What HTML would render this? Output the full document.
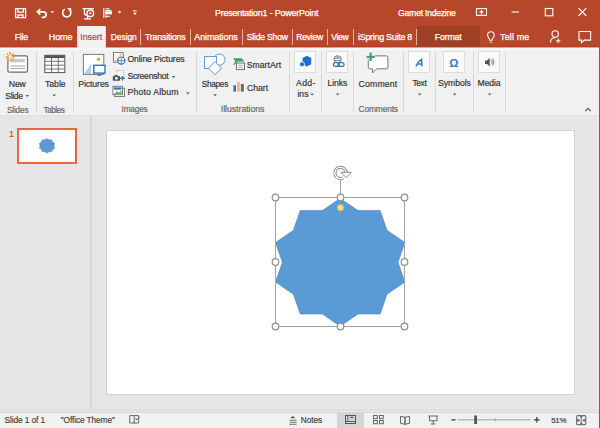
<!DOCTYPE html>
<html><head><meta charset="utf-8">
<style>
*{margin:0;padding:0;box-sizing:border-box}
html,body{width:600px;height:428px;overflow:hidden;background:#e6e6e6;font-family:"Liberation Sans",sans-serif;position:relative}
.a{position:absolute}
.t{position:absolute;white-space:nowrap;font-family:"Liberation Sans",sans-serif;-webkit-text-stroke:0.18px currentColor}
svg{position:absolute;overflow:visible}
.tsep{position:absolute;top:29px;width:1px;height:16px;background:#e2b3a6}
.gsep{position:absolute;top:51px;width:1px;height:61px;background:#dadada}
.ibox{position:absolute;top:51px;width:22px;height:22px;background:#fbfbfb;border:1px solid #dcdcdc}
</style></head><body>
<!-- bars -->
<div class="a" style="left:0;top:0;width:600px;height:47px;background:#b7472a"></div>
<div class="a" style="left:0;top:46px;width:600px;height:1px;background:#b2401f"></div>
<div class="a" style="left:0;top:47px;width:600px;height:1px;background:#d8a597"></div>
<div class="a" style="left:0;top:48px;width:599px;height:66px;background:#f1f1f1"></div>
<div class="a" style="left:0;top:48px;width:599px;height:2px;background:#f6f7f8"></div>
<div class="a" style="left:0;top:114px;width:599px;height:1px;background:#f4f4f4"></div>
<div class="a" style="left:0;top:115px;width:599px;height:1px;background:#dedede"></div>
<div class="a" style="left:92px;top:408px;width:507px;height:1px;background:repeating-linear-gradient(90deg,#ebebeb 0 2px,#e6e6e6 2px 4px)"></div>
<div class="a" style="left:0;top:409px;width:599px;height:2px;background:#dedede"></div>
<div class="a" style="left:0;top:411px;width:599px;height:1px;background:#e8e8e8"></div>
<div class="a" style="left:0;top:412px;width:599px;height:1px;background:#d4d4d4"></div>
<div class="a" style="left:0;top:413px;width:599px;height:15px;background:#f1f1f1"></div>
<div class="a" style="left:597px;top:116px;width:2px;height:293px;background:#ececec"></div>
<div class="a" style="left:599px;top:0;width:1px;height:428px;background:#b7472a"></div>

<!-- active tab -->
<div class="a" style="left:77px;top:26px;width:29px;height:22px;background:#f1f1f1;border-left:1px dotted #c9c9c9;border-right:1px dotted #c9c9c9"></div>
<div class="a" style="left:417px;top:26px;width:63px;height:21px;background:#a13f25 radial-gradient(circle,#b0513a 0.5px,transparent 0.6px) 0 0/4px 4px"></div>

<!-- tab separators -->
<div class="tsep" style="left:140px"></div>
<div class="tsep" style="left:190px"></div>
<div class="tsep" style="left:242px"></div>
<div class="tsep" style="left:292px"></div>
<div class="tsep" style="left:327px"></div>
<div class="tsep" style="left:353px"></div>
<div class="tsep" style="left:416px"></div>

<!-- QAT icons -->
<svg style="left:0;top:0" width="600" height="26" viewBox="0 0 600 26" fill="none" stroke="#fff" stroke-width="1.3">
  <!-- save -->
  <path d="M15.6 8.6h10v9h-10z M18 8.6v3.6h5.4V8.6 M18 17.6v-2.6h5v2.6"/>
  <!-- undo -->
  <path d="M37.5 11.8h5.8a2.8 2.8 0 0 1 0 5.6h-1.6 M40.2 9l-2.8 2.8 2.8 2.8" stroke-width="1.7"/>
  <path d="M50.5 11.2l1.8 2 1.8-2z" fill="#fff" stroke="none"/>
  <!-- repeat -->
  <path d="M64.8 9.2A4.1 4.1 0 1 0 69.9 10.2" stroke-width="1.6"/>
  <path d="M67 8.1h4.2v4.2z" fill="#fff" stroke="none"/>
  <!-- present from beginning -->
  <path d="M82.5 8.7h11.5 M84.5 8.7v4.5a2 2 0 0 0 2 2h1 M87.5 18.5v-3 M84 18.8h7"/>
  <circle cx="90.3" cy="13.3" r="3.3"/>
  <path d="M89.5 11.8l2.2 1.5-2.2 1.5z" fill="#fff" stroke="none"/>
  <!-- touch/mouse -->
  <path d="M103.8 8v10" stroke-width="1.1"/>
  <path d="M105.5 8.8h4 M105.5 10.5h6" stroke-width="1"/>
  <rect x="105" y="11.3" width="7" height="3" fill="#fff" stroke="none"/>
  <path d="M105 16.3h5 M106.8 14.8l-1.6 1.5 1.6 1.5" stroke-width="1"/>
  <path d="M117.6 11.2l1.9 2.3 1.9-2.3z" fill="#fff" stroke="none"/>
  <path d="M133 10.9h3.8" stroke-width="1"/>
  <path d="M133 12.8l1.9 2.2 1.9-2.2z" fill="#fff" stroke="none"/>
  <!-- window controls -->
  <rect x="476.5" y="8.6" width="10" height="6.8" stroke-width="1.1"/>
  <path d="M481.5 14.8v-4 M479.6 12.6l1.9-1.9 1.9 1.9" stroke-width="1.1"/>
  <path d="M511.6 12h7.3" stroke-width="1.1"/>
  <rect x="545.3" y="8.5" width="7.5" height="7.3" stroke-width="1.1"/>
  <path d="M578.5 8.2l7.8 7.8 M586.3 8.2l-7.8 7.8" stroke-width="1.1"/>
</svg>

<!-- tell me / share icons -->
<svg style="left:0;top:26px" width="600" height="22" viewBox="0 26 600 22" fill="none" stroke="#fff" stroke-width="1.1">
  <path d="M489.8 40.2c0-1.6-2.2-2.6-2.2-5.2a3.3 3.3 0 0 1 6.6 0c0 2.6-2.2 3.6-2.2 5.2z M490 42.2h1.8"/>
  <circle cx="555.2" cy="34" r="3.2"/>
  <path d="M550.3 42.6c0.4-3 2.3-4.8 4.9-4.8 M558.2 38.6v4.4 M556 40.8h4.4"/>
  <path d="M579 31.5h11.6v8.6h-6.4l-2.8 2.6v-2.6H579z"/>
</svg>

<!-- ribbon group separators -->
<div class="gsep" style="left:36px"></div>
<div class="gsep" style="left:73px"></div>
<div class="gsep" style="left:196px"></div>
<div class="gsep" style="left:289px"></div>
<div class="gsep" style="left:321px"></div>
<div class="gsep" style="left:353px"></div>
<div class="gsep" style="left:403px"></div>
<div class="gsep" style="left:435px"></div>
<div class="gsep" style="left:473px"></div>
<div class="gsep" style="left:505px"></div>

<!-- icon boxes -->
<div class="ibox" style="left:294px"></div>
<div class="ibox" style="left:326px"></div>
<div class="ibox" style="left:408px"></div>
<div class="ibox" style="left:443px"></div>
<div class="ibox" style="left:478px"></div>

<!-- ribbon icons -->
<svg style="left:0;top:48px" width="600" height="67" viewBox="0 48 600 67" fill="none">
  <!-- New slide -->
  <rect x="7.9" y="55.9" width="19.6" height="16.3" rx="1.5" fill="#fff" stroke="#6b6b6b" stroke-width="1.2"/>
  <rect x="10.5" y="58.9" width="14.4" height="3.4" fill="#c8c8c8"/>
  <path d="M10.5 66h14.4 M10.5 68.5h14.4" stroke="#8a8a8a" stroke-width="0.8"/>
  <g stroke="#f7c45a" stroke-width="1.3"><path d="M10.2 52.3v9 M5.7 56.8h9 M7 53.6l6.4 6.4 M13.4 53.6l-6.4 6.4"/></g>
  <g stroke="#ee8a4e" stroke-width="1.3"><path d="M10.2 52.3v1.6 M10.2 59.7v1.6 M5.7 56.8h1.6 M12.8 56.8h1.6 M7 53.6l1.1 1.1 M13.4 53.6l-1.1 1.1 M7 60l1.1-1.1 M13.4 60l-1.1-1.1"/></g>
  <circle cx="10.2" cy="56.8" r="1.5" fill="#eef6fb"/>
  <!-- Table -->
  <rect x="44.8" y="55.3" width="20" height="17.3" fill="#fff" stroke="#555" stroke-width="1"/>
  <rect x="44.8" y="55.3" width="20" height="2.8" fill="#555"/>
  <path d="M51.5 58v14.6 M58.3 58v14.6 M44.8 61.3h20 M44.8 65.2h20 M44.8 69h20" stroke="#666" stroke-width="0.9"/>
  <path d="M52.5 94.4h3.4l-1.7 2.2z" fill="#555"/>
  <path d="M25.6 95h3.4l-1.7 2z" fill="#555"/>
  <!-- Pictures -->
  <rect x="83.4" y="54.4" width="20.4" height="20" fill="#fff" stroke="#7a7a7a" stroke-width="1"/>
  <path d="M83.8 74l7.2-10v10z" fill="#b8cfe6"/>
  <circle cx="98.5" cy="59.3" r="1.8" fill="#f0a35a"/>
  <rect x="93.8" y="65.3" width="11.2" height="7.8" fill="#fff" stroke="#2e75b6" stroke-width="1.4"/>
  <path d="M99.4 73.3v1.8 M97.4 75.3h4" stroke="#2e75b6" stroke-width="1"/>
  <!-- Online pictures -->
  <rect x="113.4" y="52.6" width="9.8" height="9.6" fill="#fff" stroke="#6d6d6d" stroke-width="0.9"/>
  <circle cx="120.5" cy="54.8" r="1" fill="#f0a35a"/>
  <path d="M114 61.5l2.5-4v4z" fill="#b8cfe6"/>
  <circle cx="121.3" cy="60.6" r="3.6" fill="#fff" stroke="#2e75b6" stroke-width="1.2"/>
  <path d="M117.7 60.6h7.2 M121.3 57v7.2" stroke="#2e75b6" stroke-width="0.8"/>
  <!-- Screenshot -->
  <rect x="117.2" y="70.5" width="6.6" height="8" fill="#fff" stroke="#9a9a9a" stroke-width="0.8" stroke-dasharray="1 1"/>
  <rect x="112.8" y="76" width="7.2" height="4.7" rx="0.8" fill="#555"/>
  <rect x="114.6" y="75" width="3" height="1.5" fill="#555"/>
  <circle cx="116.4" cy="78.3" r="1.4" fill="#fff"/>
  <path d="M122.5 76v4.6 M120.2 78.3h4.6" stroke="#2e75b6" stroke-width="1.4"/>
  <path d="M171.8 76h3.4l-1.7 2z" fill="#555"/>
  <!-- Photo album -->
  <rect x="114.8" y="88.2" width="9.6" height="8.4" fill="#fff" stroke="#6d6d6d" stroke-width="0.9"/>
  <rect x="112.9" y="86.3" width="9.6" height="8.4" fill="#fff" stroke="#6d6d6d" stroke-width="0.9"/>
  <rect x="114" y="87.4" width="7.4" height="2.2" fill="#2e75b6"/>
  <path d="M114 94l3-3 2 1.5 2.4-2.4v3.9z" fill="#7bab6e"/>
  <path d="M186 92.4h3.6l-1.8 2z" fill="#555"/>
  <!-- Shapes -->
  <circle cx="219.4" cy="59.6" r="5.6" fill="#fff" stroke="#5189c7" stroke-width="0.9"/>
  <rect x="204.6" y="56.6" width="11.8" height="11.8" fill="#fff" stroke="#5189c7" stroke-width="0.9"/>
  <path d="M215 61.6l6.6 6.6-6.6 6.6-6.6-6.6z" fill="#fff" stroke="#5189c7" stroke-width="0.9"/>
  <path d="M213.3 94.3h3.4l-1.7 2z" fill="#555"/>
  <!-- SmartArt -->
  <path d="M233.2 58.3H241.6L244.6 61.4H237.2L234.6 64.8H233.2L235.2 61.4z" fill="#3f9b78"/>
  <rect x="236.5" y="63" width="8" height="6.6" fill="#fff" stroke="#6d6d6d" stroke-width="1"/>
  <path d="M238.3 65.3h4.6 M238.3 67.4h4.6" stroke="#8a8a8a" stroke-width="0.8"/>
  <!-- Chart -->
  <rect x="233.4" y="85.2" width="2.6" height="6.4" fill="#2e75b6"/>
  <rect x="237" y="82" width="2.8" height="9.6" fill="#f4b183"/>
  <rect x="240.9" y="84" width="2.9" height="7.6" fill="#666"/>
  <!-- Add-ins -->
  <path d="M302.6 58l4.3-2.2 4.3 2.2v6.2l-4.3 2.3-4.3-2.3z" fill="#1f6fc5"/>
  <circle cx="302" cy="64.3" r="2.5" fill="#1f6fc5" stroke="#fbfbfb" stroke-width="0.9"/>
  <path d="M310.4 93.6h3.4l-1.7 2z" fill="#555"/>
  <!-- Links -->
  <circle cx="337.6" cy="59.4" r="3.7" fill="#fbfbfb" stroke="#6d6d6d" stroke-width="0.9"/>
  <path d="M334 58.2h7.2 M334 60.6h7.2 M337.6 55.8v2.4" stroke="#6d6d6d" stroke-width="0.8"/>
  <rect x="333.4" y="62.6" width="6" height="3.8" rx="1.9" fill="#fbfbfb" stroke="#2e75b6" stroke-width="1.2"/>
  <rect x="338" y="62.6" width="6" height="3.8" rx="1.9" fill="none" stroke="#2e75b6" stroke-width="1.2"/>
  <path d="M336 93.6h3.4l-1.7 2z" fill="#555"/>
  <!-- Comment -->
  <path d="M369.8 55.9h16.6a1.5 1.5 0 0 1 1.5 1.5v9.9a1.5 1.5 0 0 1-1.5 1.5h-9.7l-4.2 4.2v-4.2h-2.7a1.5 1.5 0 0 1-1.5-1.5v-9.9a1.5 1.5 0 0 1 1.5-1.5z" fill="#fff" stroke="#767676" stroke-width="1"/>
  <path d="M370.6 52.6v8.4 M366.4 56.8h8.4" stroke="#fff" stroke-width="4"/>
  <path d="M370.6 52.6v8.4 M366.4 56.8h8.4" stroke="#4a9d7f" stroke-width="2.3"/>
  <!-- Text -->
  <path d="M416 66.4Q418.2 61.2 421.6 59.3L421.9 66.4 M417.9 63.9h3.8" stroke="#3a78c0" stroke-width="1.5"/>
  <path d="M418 93.6h3.4l-1.7 2z" fill="#555"/>
  <!-- Symbols -->
  <text x="449.2" y="66.5" font-family="Liberation Sans" font-size="11.5" font-weight="bold" fill="#3a78c0">Ω</text>
  <path d="M453 93.6h3.4l-1.7 2z" fill="#555"/>
  <!-- Media -->
  <path d="M485 60.5h2l2.7-2.5v8.5l-2.7-2.5h-2z" fill="#555"/>
  <path d="M491 59.8a3 3 0 0 1 0 4.6 M492.3 58.5a5 5 0 0 1 0 7.2" stroke="#2e75b6" stroke-width="0.9"/>
  <path d="M488 93.6h3.4l-1.7 2z" fill="#555"/>
  <path d="M299 93.6h3.4l-1.7 2z" fill="none"/>
  <!-- collapse caret -->
  <path d="M585.2 111.2l2.8-2.8 2.8 2.8" stroke="#555" stroke-width="1.2"/>
</svg>

<!-- slide pane -->
<div class="a" style="left:90px;top:117px;width:1px;height:292px;background:#d5d5d5"></div><div class="a" style="left:91px;top:117px;width:1px;height:292px;background:#dadada"></div>
<div class="a" style="left:17px;top:128px;width:60px;height:36px;border:2px solid #e9663f;background:#fff"></div>
<svg style="left:0;top:116px" width="92" height="60" viewBox="0 116 92 60">
  <polygon id="thumbstar" fill="#5b9bd5" stroke="#4a86c0" stroke-width="0.4" points="47.00,138.40 44.86,139.81 42.21,139.81 41.39,142.10 39.25,143.51 40.07,145.80 39.25,148.09 41.39,149.50 42.21,151.79 44.86,151.79 47.00,153.20 49.14,151.79 51.79,151.79 52.61,149.50 54.75,148.09 53.93,145.80 54.75,143.51 52.61,142.10 51.79,139.81 49.14,139.81"/>
</svg>

<!-- slide -->
<div class="a" style="left:106px;top:130px;width:469px;height:265px;background:#fff;border:1px solid #d2d2d2"></div>

<!-- selected shape -->
<svg style="left:0;top:116px" width="599" height="295" viewBox="0 116 599 295">
  <polygon id="star" fill="#5b9bd5" stroke="#4a7fb5" stroke-width="0.6" points="340.20,198.40 322.32,210.60 300.23,210.60 293.40,230.35 275.53,242.55 282.36,262.30 275.53,282.05 293.40,294.25 300.23,314.00 322.32,314.00 340.20,326.20 358.08,314.00 380.17,314.00 387.00,294.25 404.87,282.05 398.04,262.30 404.87,242.55 387.00,230.35 380.17,210.60 358.08,210.60"/>
  <g stroke="#a3a3a3" stroke-width="1" fill="none">
    <rect x="275.5" y="197.5" width="129" height="129"/>
    <path d="M340.5 180v17"/>
  </g>
  <g fill="#fff" stroke="#8f8f8f" stroke-width="1.2">
    <circle cx="275.5" cy="197.5" r="3.3"/>
    <circle cx="340.5" cy="197.5" r="3.3"/>
    <circle cx="404.5" cy="197.5" r="3.3"/>
    <circle cx="275.5" cy="262" r="3.3"/>
    <circle cx="404.5" cy="262" r="3.3"/>
    <circle cx="275.5" cy="326.5" r="3.3"/>
    <circle cx="340.5" cy="326.5" r="3.3"/>
    <circle cx="404.5" cy="326.5" r="3.3"/>
  </g>
  <circle cx="340.5" cy="207.8" r="3.3" fill="#f9d98a" stroke="#c9aa62" stroke-width="0.8"/>
  <!-- rotation handle -->
  <path d="M343.3 177.9 A5.65 5.65 0 1 1 346.15 172.6" fill="none" stroke="#8c8c8c" stroke-width="3.3"/>
  <path d="M343.3 177.9 A5.65 5.65 0 1 1 346.15 172.6" fill="none" stroke="#fff" stroke-width="1.3"/>
  <path d="M340.9 172.3h10.4l-5.2 5.4z" fill="#fff" stroke="#8c8c8c" stroke-width="1" stroke-linejoin="round"/>
</svg>

<!-- status bar icons -->
<div class="a" style="left:337px;top:413px;width:27px;height:15px;background:#d5d5d5"></div>
<svg style="left:0;top:412px" width="599" height="16" viewBox="0 412 599 16" fill="none" stroke="#666" stroke-width="1">
  <!-- spell check -->
  <path d="M129.7 415.6h9v7.4h-9z M134.2 415.6v8.2" stroke="#6a6a6a" stroke-width="1"/>
  <path d="M135.6 418.2l1.2 1.8 2.6-3.4" stroke="#6a6a6a" stroke-width="1"/>
  <!-- notes -->
  <path d="M292.8 415.7l-2.8 2.6h5.6z" fill="#666" stroke="none"/>
  <path d="M289.5 420.3h7 M289.5 422.3h7 M289.5 424.3h7" stroke-width="0.9"/>
  <!-- normal view -->
  <rect x="345.5" y="415.5" width="10" height="8" stroke="#555"/>
  <path d="M347.8 415.5v6 M345.5 421.5h10" stroke="#555" stroke-width="0.9"/>
  <rect x="350.3" y="416.8" width="3" height="1.4" fill="#555" stroke="none"/>
  <!-- sorter -->
  <rect x="373.5" y="415.5" width="3.8" height="3.2"/>
  <rect x="379.5" y="415.5" width="3.8" height="3.2"/>
  <rect x="373.5" y="420.5" width="3.8" height="3.2"/>
  <rect x="379.5" y="420.5" width="3.8" height="3.2"/>
  <!-- reading -->
  <path d="M400.5 416.3l4.5 1v7l-4.5-1z M409.5 416.3l-4.5 1v7l4.5-1z"/>
  <!-- slideshow -->
  <path d="M428.5 416h9.5 M429.5 416v4.8h7.5V416 M433.2 420.8v3 M431 424h4.4"/>
  <!-- zoom -->
  <path d="M451.5 419.8h4" stroke="#555" stroke-width="1.5"/>
  <path d="M457.5 419.8h73.5" stroke="#a0a0a0" stroke-width="1"/>
  <path d="M495 418.2v3.2" stroke="#a0a0a0"/>
  <rect x="474.2" y="415.5" width="2.8" height="8.5" fill="#555" stroke="none"/>
  <path d="M534 419.8h5.6 M536.8 417v5.6" stroke="#555" stroke-width="1.5"/>
  <!-- fit -->
  <rect x="576.6" y="415.6" width="9.2" height="9" rx="1" stroke="#707070" stroke-width="1.1"/>
  <path d="M579.9 416h2.8l-1.4 4.2z M579.9 424.5h2.8l-1.4-4.2z M577 418.7v3.2l4.3-1.6z M585.6 418.7v3.2l-4.3-1.6z" fill="#707070" stroke="none"/>
</svg>

<div class="t" style="left:215px;top:8.5px;font-size:8.92px;line-height:8.92px;letter-spacing:-0.2px;color:#ffffff;-webkit-text-stroke:0.25px #fff">Presentation1 - PowerPoint</div>
<div class="t" style="left:398px;top:8.5px;font-size:8.55px;line-height:8.55px;letter-spacing:-0.214px;color:#ffffff;-webkit-text-stroke:0.25px #fff">Garnet Indezine</div>
<div class="t" style="left:14.8px;top:33.2px;font-size:8.81px;line-height:8.81px;letter-spacing:-0.3px;color:#ffffff;-webkit-text-stroke:0.25px #fff">File</div>
<div class="t" style="left:48.75px;top:33.2px;font-size:9px;line-height:9px;letter-spacing:-0.083px;color:#ffffff;-webkit-text-stroke:0.25px #fff">Home</div>
<div class="t" style="left:80.25px;top:33.2px;font-size:8.9px;line-height:8.9px;letter-spacing:-0.05px;color:#b7472a">Insert</div>
<div class="t" style="left:110.75px;top:33.2px;font-size:8.55px;line-height:8.55px;letter-spacing:-0.1px;color:#ffffff;-webkit-text-stroke:0.25px #fff">Design</div>
<div class="t" style="left:145px;top:33.2px;font-size:8.8px;line-height:8.8px;letter-spacing:-0.2px;color:#ffffff;-webkit-text-stroke:0.25px #fff">Transitions</div>
<div class="t" style="left:194.25px;top:33.2px;font-size:9px;line-height:9px;letter-spacing:-0.111px;color:#ffffff;-webkit-text-stroke:0.25px #fff">Animations</div>
<div class="t" style="left:246.75px;top:33.2px;font-size:8.61px;line-height:8.61px;letter-spacing:-0.194px;color:#ffffff;-webkit-text-stroke:0.25px #fff">Slide Show</div>
<div class="t" style="left:296.25px;top:33.2px;font-size:8.55px;line-height:8.55px;letter-spacing:-0.2px;color:#ffffff;-webkit-text-stroke:0.25px #fff">Review</div>
<div class="t" style="left:331.25px;top:33.2px;font-size:8.55px;line-height:8.55px;letter-spacing:-0.333px;color:#ffffff;-webkit-text-stroke:0.25px #fff">View</div>
<div class="t" style="left:358px;top:33.2px;font-size:8.89px;line-height:8.89px;letter-spacing:-0.25px;color:#ffffff;-webkit-text-stroke:0.25px #fff">iSpring Suite 8</div>
<div class="t" style="left:434.7px;top:33.2px;font-size:8.78px;line-height:8.78px;letter-spacing:-0.14px;color:#ffffff;-webkit-text-stroke:0.25px #fff">Format</div>
<div class="t" style="left:500px;top:33.2px;font-size:9px;line-height:9px;letter-spacing:0.125px;color:#ffffff;-webkit-text-stroke:0.25px #fff">Tell me</div>
<div class="t" style="left:8.75px;top:79.9px;font-size:8.7px;line-height:8.7px;letter-spacing:-0.125px;color:#333333">New</div>
<div class="t" style="left:5.25px;top:91.5px;font-size:8.54px;line-height:8.54px;letter-spacing:-0.287px;color:#333333">Slide</div>
<div class="t" style="left:45px;top:79.9px;font-size:8.62px;line-height:8.62px;letter-spacing:0.0px;color:#333333">Table</div>
<div class="t" style="left:78.2px;top:80px;font-size:8.7px;line-height:8.7px;letter-spacing:-0.086px;color:#333333">Pictures</div>
<div class="t" style="left:127.4px;top:55px;font-size:8.7px;line-height:8.7px;letter-spacing:-0.114px;color:#333333">Online Pictures</div>
<div class="t" style="left:127.4px;top:72px;font-size:8.62px;line-height:8.62px;letter-spacing:-0.244px;color:#333333">Screenshot</div>
<div class="t" style="left:127.4px;top:88.4px;font-size:8.7px;line-height:8.7px;letter-spacing:0.19px;color:#333333">Photo Album</div>
<div class="t" style="left:201.7px;top:80.7px;font-size:8.28px;line-height:8.28px;letter-spacing:-0.28px;color:#333333">Shapes</div>
<div class="t" style="left:246.7px;top:60.7px;font-size:8.7px;line-height:8.7px;letter-spacing:0.014px;color:#333333">SmartArt</div>
<div class="t" style="left:247px;top:84px;font-size:8.7px;line-height:8.7px;letter-spacing:-0.05px;color:#333333">Chart</div>
<div class="t" style="left:296px;top:79px;font-size:8.7px;line-height:8.7px;letter-spacing:0.333px;color:#333333">Add-</div>
<div class="t" style="left:297.4px;top:89.6px;font-size:8.7px;line-height:8.7px;letter-spacing:0.0px;color:#333333">ins</div>
<div class="t" style="left:327.6px;top:79px;font-size:8.7px;line-height:8.7px;letter-spacing:-0.15px;color:#333333">Links</div>
<div class="t" style="left:358.6px;top:80px;font-size:8.7px;line-height:8.7px;letter-spacing:0.167px;color:#333333">Comment</div>
<div class="t" style="left:412.4px;top:80px;font-size:8.25px;line-height:8.25px;letter-spacing:-0.267px;color:#333333">Text</div>
<div class="t" style="left:438px;top:79px;font-size:8.7px;line-height:8.7px;letter-spacing:-0.067px;color:#333333">Symbols</div>
<div class="t" style="left:477.6px;top:79px;font-size:8.7px;line-height:8.7px;letter-spacing:-0.15px;color:#333333">Media</div>
<div class="t" style="left:6.9px;top:106.5px;font-size:8.25px;line-height:8.25px;letter-spacing:-0.16px;color:#666666">Slides</div>
<div class="t" style="left:43.5px;top:106.5px;font-size:8.25px;line-height:8.25px;letter-spacing:-0.5px;color:#666666">Tables</div>
<div class="t" style="left:121.6px;top:106px;font-size:8.25px;line-height:8.25px;letter-spacing:-0.2px;color:#666666">Images</div>
<div class="t" style="left:220.8px;top:105.2px;font-size:8.7px;line-height:8.7px;letter-spacing:-0.025px;color:#666666">Illustrations</div>
<div class="t" style="left:358.6px;top:104.6px;font-size:8.37px;line-height:8.37px;letter-spacing:-0.143px;color:#666666">Comments</div>
<div class="t" style="left:4.5px;top:415.8px;font-size:8.3px;line-height:8.3px;letter-spacing:-0.091px;color:#444444">Slide 1 of 1</div>
<div class="t" style="left:60.75px;top:415.6px;font-size:8.3px;line-height:8.3px;letter-spacing:-0.096px;color:#444444">"Office Theme"</div>
<div class="t" style="left:300.75px;top:415.5px;font-size:8.3px;line-height:8.3px;letter-spacing:-0.062px;color:#444444">Notes</div>
<div class="t" style="left:551.2px;top:416.6px;font-size:7.8500000000000005px;line-height:7.8500000000000005px;letter-spacing:-0.2px;color:#444444">51%</div>
<div class="t" style="left:9px;top:129.7px;font-size:9px;line-height:9px;letter-spacing:0px;color:#d24726">1</div>
</body></html>
